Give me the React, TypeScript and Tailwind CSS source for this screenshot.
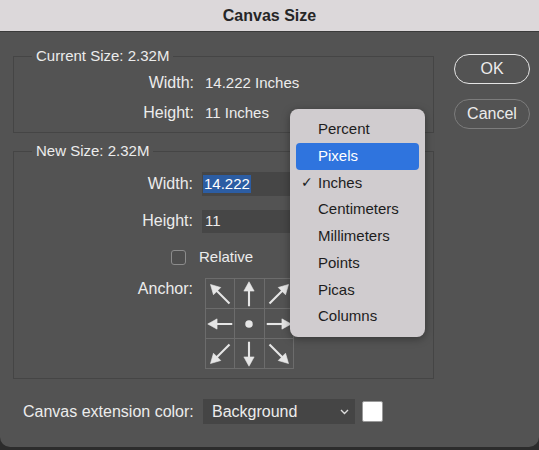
import React from "react";

function Arrow({ angle, len }: { angle: number; len: number }) {
  const tip = 12 - len / 2;
  const tail = 12 + len / 2;
  return (
    <svg width="28" height="28" viewBox="0 0 24 24">
      <g transform={`rotate(${angle} 12 12)`} fill="#e6e6e6" stroke="#e6e6e6">
        <line x1="12" y1={tail} x2="12" y2={tip + 6} strokeWidth="1.8" />
        <polygon points={`12,${tip} 7.6,${tip + 8} 16.4,${tip + 8}`} strokeWidth="0.5" strokeLinejoin="round" />
      </g>
    </svg>
  );
}

function Dot() {
  return (
    <svg width="28" height="28" viewBox="0 0 24 24">
      <circle cx="12" cy="12" r="3.2" fill="#e6e6e6" />
    </svg>
  );
}

const cells: (number | null)[] = [-45, 0, 45, -90, null, 90, -135, 180, 135];

export default function App() {
  const units = ["Percent", "Pixels", "Inches", "Centimeters", "Millimeters", "Points", "Picas", "Columns"];
  return (
    <div className="relative w-[539px] h-[450px] bg-[#2c2c2c] font-['Liberation_Sans',Arial,sans-serif] text-[15px] text-[#ececec]">
      <div className="flex h-[447px] flex-col overflow-hidden rounded-b-[10px] bg-[#535353]">
        <div className="flex h-[32px] shrink-0 items-center justify-center border-b border-[#3a3a3a] bg-[#dcd8da] text-[16px] font-bold text-[#262626]">
          Canvas Size
        </div>
        <div className="flex pl-[13px] pt-[15px]">
          <div className="flex w-[421px] flex-col">
            <fieldset className="border border-[#454545] pb-[4px] pt-[3px]">
              <legend className="ml-[18px] px-[4px] leading-[18px]">Current Size: 2.32M</legend>
              <div className="grid grid-cols-[180px_auto] gap-x-[11px]">
                <div className="flex h-[30px] items-center justify-end text-[16px]">Width:</div>
                <div className="flex h-[30px] items-center">14.222 Inches</div>
                <div className="flex h-[30px] items-center justify-end text-[16px]">Height:</div>
                <div className="flex h-[30px] items-center">11 Inches</div>
              </div>
            </fieldset>
            <fieldset className="mt-[9px] border border-[#454545] pb-[9px] pt-[12px]">
              <legend className="ml-[18px] px-[4px] leading-[18px]">New Size: 2.32M</legend>
              <div className="flex items-center">
                <div className="w-[179px] text-right text-[16px]">Width:</div>
                <div className="ml-[9px] flex h-[24px] w-[88px] items-center bg-[#464646] pl-[1px]">
                  <span className="bg-[#2c5da3] px-[1px] leading-[18px] text-white">14.222</span>
                </div>
                <div className="ml-[7px] h-[24px] w-[122px] bg-[#464646]" />
              </div>
              <div className="mt-[13px] flex items-center">
                <div className="w-[179px] text-right text-[16px]">Height:</div>
                <div className="ml-[9px] flex h-[23px] w-[88px] items-center bg-[#464646] pl-[3px]">11</div>
                <div className="ml-[7px] h-[23px] w-[122px] bg-[#464646]" />
              </div>
              <div className="mt-[17px] flex h-[15px] items-center">
                <div className="ml-[157px] h-[15px] w-[15px] rounded-[3px] border border-[#8c8c8c] bg-[#4e4e4e]" />
                <div className="ml-[13px]">Relative</div>
              </div>
              <div className="mt-[13px] flex items-start">
                <div className="w-[179px] pt-[2px] text-right text-[16px] leading-[18px]">Anchor:</div>
                <div className="ml-[12px] grid w-[89px] grid-cols-3 border-l border-t border-[#6c6c6c]">
                  {cells.map((a, i) => (
                    <div key={i} className="flex h-[30px] items-center justify-center border-b border-r border-[#6c6c6c]">
                      {a === null ? <Dot /> : <Arrow angle={a} len={a % 90 === 0 ? 21 : 23} />}
                    </div>
                  ))}
                </div>
              </div>
            </fieldset>
          </div>
          <div className="ml-[20px] flex flex-col pt-[7px]">
            <div className="flex h-[30px] w-[76px] items-center justify-center rounded-full border-[1.5px] border-[#e4e4e4] text-[16px]">
              OK
            </div>
            <div className="mt-[15px] flex h-[30px] w-[76px] items-center justify-center rounded-full border-[1.5px] border-[#7c7c7c] text-[16px]">
              Cancel
            </div>
          </div>
        </div>
        <div className="mt-[20px] flex items-center pl-[23px]">
          <div className="w-[180px] shrink-0 whitespace-nowrap text-[16px]">Canvas extension color:</div>
          <div className="flex h-[25px] w-[152px] items-center justify-between bg-[#454545] pl-[9px] pr-[6px]">
            <span className="text-[16px]">Background</span>
            <svg width="9" height="6" viewBox="0 0 9 6">
              <polyline points="1,1 4.5,4.5 8,1" fill="none" stroke="#dcdcdc" strokeWidth="1.4" />
            </svg>
          </div>
          <div className="ml-[7px] h-[21px] w-[21px] rounded-[2px] border border-[#9a9a9a] bg-white" />
        </div>
      </div>
      <div className="absolute left-[290px] top-[109px] w-[135px] rounded-[8px] bg-[#d0cccf] px-[6px] py-[7px] text-[#1d1d1d] shadow-[0_2px_8px_rgba(0,0,0,0.35)]">
        {units.map((u) => (
          <div
            key={u}
            className={
              u === "Pixels"
                ? "flex h-[26.75px] items-center rounded-[4px] bg-[#2f74de] text-white"
                : "flex h-[26.75px] items-center"
            }
          >
            <span className="w-[22px] pl-[5px] font-['DejaVu_Sans',sans-serif] text-[14px]">{u === "Inches" ? "✓" : ""}</span>
            <span>{u}</span>
          </div>
        ))}
      </div>
    </div>
  );
}
